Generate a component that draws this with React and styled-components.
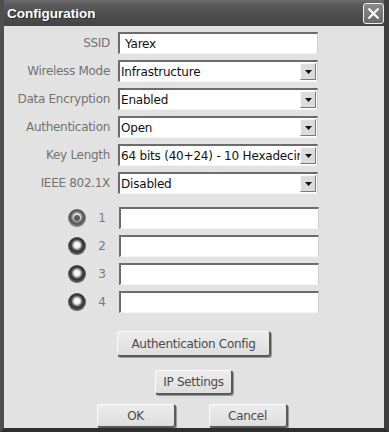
import React from "react";
import styled, { createGlobalStyle } from "styled-components";

const Global = createGlobalStyle`
  html, body { margin: 0; padding: 0; background: #e2e2e2; }
  body { font-family: Tahoma, "DejaVu Sans", "Liberation Sans", sans-serif; }
  * { box-sizing: border-box; }
`;

const Win = styled.div`
  width: 389px;
  height: 432px;
  display: flex;
  flex-direction: column;
  background: #4a4a4a;
  border-left: 4px solid #4f4f4f;
  border-right: 5px solid #3e3e3e;
  border-bottom: 4px solid #2e2e2e;
  overflow: hidden;
`;

const TitleBar = styled.div`
  height: 28px;
  margin: 0 -5px 0 -4px;
  padding: 0 4px 0 7px;
  display: flex;
  align-items: center;
  justify-content: space-between;
  background: linear-gradient(#6e6e6e 0%, #5a5a5a 20%, #4d4d4d 60%, #454545 100%);
  border-top-left-radius: 6px;
  border-top-right-radius: 6px;
`;

const Title = styled.span`
  font-family: "Liberation Sans", Arial, sans-serif;
  font-weight: bold;
  font-size: 13.5px;
  color: #ffffff;
  text-shadow: 1px 1px 0 #2a2a2a;
`;

const CloseBtn = styled.div`
  width: 21px;
  height: 21px;
  border: 1px solid #f0f0f0;
  border-radius: 3px;
  background: linear-gradient(#8a8a8a, #6a6a6a);
  display: flex;
  align-items: center;
  justify-content: center;
  margin-right: 1px;
`;

const Body = styled.div`
  flex: 1;
  background: #e2e2e2;
  display: flex;
  flex-direction: column;
  padding-top: 6px;
`;

const Form = styled.div`
  display: grid;
  grid-template-columns: 106px 200px;
  column-gap: 8px;
  row-gap: 6px;
  align-items: center;
`;

const Label = styled.label`
  text-align: right;
  font-family: "DejaVu Sans", "Liberation Sans", sans-serif;
  font-size: 12px;
  color: #727272;
  letter-spacing: -0.3px;
  white-space: nowrap;
`;

const Field = styled.div`
  height: 22px;
  background: #ffffff;
  border-top: 2px solid #6c6c6c;
  border-left: 2px solid #6c6c6c;
  border-right: 1px solid #d0d0d0;
  border-bottom: 1px solid #f4f4f4;
  display: flex;
  align-items: center;
  font-family: "DejaVu Sans", "Liberation Sans", sans-serif;
  font-size: 12px;
  letter-spacing: -0.2px;
  color: #111;
  padding-left: ${(p) => (p.$pad ? p.$pad : 1)}px;
  overflow: hidden;
  white-space: nowrap;
`;

const SelectText = styled.span`
  flex: 1;
  overflow: hidden;
`;

const Arrow = styled.div`
  width: 16px;
  height: 17px;
  margin-right: 1px;
  flex: none;
  background: #dcdcdc;
  border-top: 1px solid #f8f8f8;
  border-left: 1px solid #f8f8f8;
  border-right: 1px solid #7a7a7a;
  border-bottom: 1px solid #7a7a7a;
  display: flex;
  align-items: center;
  justify-content: center;
`;

const Keys = styled.div`
  display: grid;
  grid-template-columns: 17px 20px 200px;
  column-gap: 7px;
  row-gap: 6px;
  align-items: center;
  margin-top: 13px;
  padding-left: 64px;
`;

const Radio = styled.div`
  width: 18px;
  height: 18px;
  border-radius: 50%;
  background: ${(p) =>
    p.$on
      ? "radial-gradient(circle closest-side at 50% 45%, #f4f4f4 0%, #e6e6e6 40%, #a0a0a0 55%, #6a6a6a 72%, #4e4e4e 90%, #7a7a7a 100%)"
      : "radial-gradient(circle closest-side at 50% 45%, #ffffff 0%, #eeeeee 35%, #a8a8a8 50%, #4a4a4a 68%, #2e2e2e 88%, #5a5a5a 100%)"};
  display: flex;
  align-items: center;
  justify-content: center;
  &::after {
    content: "";
    width: ${(p) => (p.$on ? 6 : 0)}px;
    height: ${(p) => (p.$on ? 6 : 0)}px;
    border-radius: 50%;
    background: #5a5a5a;
  }
`;

const KeyNum = styled.span`
  font-family: "DejaVu Sans", "Liberation Sans", sans-serif;
  font-size: 12px;
  color: #7a7a7a;
  text-align: center;
`;

const Buttons = styled.div`
  display: flex;
  flex-direction: column;
  align-items: center;
  margin-top: 18px;
`;

const Btn = styled.div`
  width: ${(p) => p.$w}px;
  height: ${(p) => p.$h || 25}px;
  background: linear-gradient(#ececec, #dedede);
  border-radius: 3px;
  border-top: 1px solid #fafafa;
  border-left: 1px solid #fafafa;
  border-right: 2px solid #5a5a5a;
  border-bottom: 2px solid #5a5a5a;
  box-shadow: 1px 1px 0 #9a9a9a;
  display: flex;
  align-items: center;
  justify-content: center;
  font-family: "DejaVu Sans", "Liberation Sans", sans-serif;
  font-size: 12px;
  letter-spacing: -0.3px;
  color: #4a4a4a;
`;

const BtnRow = styled.div`
  display: flex;
  gap: 33px;
  margin-top: ${(p) => p.$mt}px;
  margin-left: ${(p) => p.$dx || 0}px;
`;

const ArrowIcon = () => (
  <svg width="7" height="4" viewBox="0 0 7 4">
    <path d="M0 0h7L3.5 4z" fill="#111" />
  </svg>
);

const Select = ({ value }) => (
  <Field>
    <SelectText>{value}</SelectText>
    <Arrow>
      <ArrowIcon />
    </Arrow>
  </Field>
);

export default function App() {
  return (
    <>
      <Global />
      <Win>
        <TitleBar>
          <Title>Configuration</Title>
          <CloseBtn>
            <svg width="13" height="13" viewBox="0 0 13 13">
              <path d="M1.5 1.5L11.5 11.5M11.5 1.5L1.5 11.5" stroke="#fff" strokeWidth="2.2" />
            </svg>
          </CloseBtn>
        </TitleBar>
        <Body>
          <Form>
            <Label>SSID</Label>
            <Field $pad={5}>Yarex</Field>
            <Label>Wireless Mode</Label>
            <Select value="Infrastructure" />
            <Label>Data Encryption</Label>
            <Select value="Enabled" />
            <Label>Authentication</Label>
            <Select value="Open" />
            <Label>Key Length</Label>
            <Select value="64 bits (40+24) - 10 Hexadecimal" />
            <Label>IEEE 802.1X</Label>
            <Select value="Disabled" />
          </Form>
          <Keys>
            {[1, 2, 3, 4].map((n) => (
              <React.Fragment key={n}>
                <Radio $on={n === 1} />
                <KeyNum>{n}</KeyNum>
                <Field />
              </React.Fragment>
            ))}
          </Keys>
          <Buttons>
            <Btn $w={154} $h={26}>Authentication Config</Btn>
            <BtnRow $mt={13}>
              <Btn $w={78}>IP Settings</Btn>
            </BtnRow>
            <BtnRow $mt={9} $dx={-4}>
              <Btn $w={79} $h={24}>OK</Btn>
              <Btn $w={79} $h={24}>Cancel</Btn>
            </BtnRow>
          </Buttons>
        </Body>
      </Win>
    </>
  );
}
